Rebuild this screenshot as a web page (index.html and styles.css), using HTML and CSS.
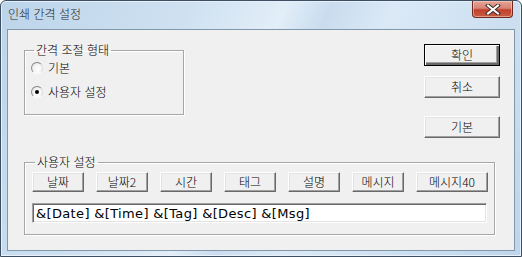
FILE: index.html
```html
<!DOCTYPE html>
<html lang="ko">
<head>
    <meta charset="UTF-8">
    <title>인쇄 간격 설정</title>
    <link rel="stylesheet" href="styles.css">
</head>
<body>
    <div class="window">
        <div class="titlebar">
            <span class="title">인쇄 간격 설정</span>
            <span class="close-btn">
                <svg width="18" height="11" viewBox="0 0 18 11">
                    <path d="M4 1.5 L14 9.5 M14 1.5 L4 9.5" stroke="#3c2a28" stroke-width="4" stroke-linecap="square"/>
                    <path d="M4 1.5 L14 9.5 M14 1.5 L4 9.5" stroke="#ffffff" stroke-width="2" stroke-linecap="square"/>
                </svg>
            </span>
        </div>

        <div class="client">
            <div class="top-row">
                <fieldset class="group group-mode">
                    <legend>간격 조절 형태</legend>
                    <div class="radio-row">
                        <span class="radio"></span>
                        <span>기본</span>
                    </div>
                    <div class="radio-row">
                        <span class="radio checked"></span>
                        <span>사용자 설정</span>
                    </div>
                </fieldset>

                <div class="side-buttons">
                    <button class="btn btn-side default">확인</button>
                    <button class="btn btn-side">취소</button>
                    <button class="btn btn-side btn-reset">기본</button>
                </div>
            </div>

            <fieldset class="group group-user">
                <legend>사용자 설정</legend>
                <div class="tag-buttons">
                    <button class="btn btn-tag">날짜</button>
                    <button class="btn btn-tag">날짜2</button>
                    <button class="btn btn-tag">시간</button>
                    <button class="btn btn-tag">태그</button>
                    <button class="btn btn-tag">설명</button>
                    <button class="btn btn-tag">메시지</button>
                    <button class="btn btn-tag wide">메시지40</button>
                </div>
                <div class="format-field">&amp;[Date] &amp;[Time] &amp;[Tag] &amp;[Desc] &amp;[Msg]</div>
            </fieldset>
        </div>
    </div>
</body>
</html>
```

FILE: styles.css
```css
/* 대화상자 기본 */
body {
    margin: 0;
    padding: 0;
    background-color: #ffffff;
    font-family: "Noto Sans CJK KR", "DejaVu Sans", sans-serif;
    font-size: 12px;
    font-weight: 300;
}

.window {
    width: 522px;
    height: 257px;
    box-sizing: border-box;
    border: 1px solid #3d4f62;
    border-radius: 6px 6px 0 0;
    padding: 0 6px 5px 6px;
    background: linear-gradient(115deg, #bcd4ea 0%, #cfe1f1 30%, #e2eef8 45%, #c9dcee 52%, #dbe9f6 62%, #cde0f1 80%, #bcd6ec 100%);
    box-shadow: inset 0 0 0 1px #e8f1f9;
}

.titlebar {
    height: 28px;
    display: flex;
    justify-content: space-between;
    align-items: flex-start;
}

.title {
    margin: 6px 0 0 1px;
    color: #1e1e1e;
    line-height: 14px;
}

.close-btn {
    width: 41px;
    height: 17px;
    margin-right: 2px;
    box-sizing: border-box;
    border: 1px solid #6f2a22;
    border-top: none;
    border-radius: 0 0 4px 4px;
    background: linear-gradient(#e4a496 0%, #d98474 45%, #c1412d 55%, #c85c41 100%);
    box-shadow: inset 0 0 0 1px rgba(255, 220, 210, 0.5);
    display: flex;
    justify-content: center;
    align-items: center;
}

.client {
    height: 222px;
    box-sizing: border-box;
    border: 1px solid #8397ab;
    background-color: #f0f0f0;
    padding: 13px 14px 0 16px;
    color: #000000;
}

/* 그룹 상자 */
.group {
    margin: 0;
    border: 1px solid #a6a6a6;
    box-shadow: 1px 1px 0 #ffffff, inset 1px 1px 0 #ffffff;
    min-width: 0;
}

.group legend {
    padding: 0 2px;
    margin-left: 3px;
    line-height: 14px;
}

.top-row {
    height: 112px;
    display: flex;
    justify-content: space-between;
    align-items: flex-start;
}

.group-mode {
    width: 160px;
    height: 72px;
    box-sizing: border-box;
    padding: 0 6px 0 6px;
}

.radio-row {
    height: 24px;
    display: flex;
    align-items: center;
    gap: 5px;
    line-height: 14px;
}

.radio-row:first-of-type {
    margin-top: -1px;
}

.radio {
    width: 12px;
    height: 12px;
    box-sizing: border-box;
    border-radius: 50%;
    border: 1px solid;
    border-color: #808080 #dcdcdc #ffffff #909090;
    background: radial-gradient(circle at 60% 60%, #ffffff 0%, #f4f4f4 50%, #d6d6d6 100%);
    position: relative;
}

.radio.checked::after {
    content: "";
    position: absolute;
    left: 3px;
    top: 3px;
    width: 4px;
    height: 4px;
    border-radius: 50%;
    background-color: #000000;
}

/* 버튼 */
.btn {
    font-family: "Noto Sans CJK KR", "DejaVu Sans", sans-serif;
    font-size: 12px;
    font-weight: 300;
    color: #000000;
    background-color: #f0f0f0;
    border: 1px solid;
    border-color: #ffffff #696969 #696969 #ffffff;
    box-shadow: inset -1px -1px 0 #a0a0a0, inset 1px 1px 0 #e3e3e3;
    padding: 0;
    line-height: 14px;
    cursor: pointer;
}

.side-buttons {
    margin-top: 1px;
    display: flex;
    flex-direction: column;
    gap: 10px;
}

.btn-side {
    width: 76px;
    height: 22px;
}

.btn-reset {
    margin-top: 8px;
}

.btn.default {
    border-color: #000000;
    box-shadow: inset 1px 1px 0 #ffffff, inset -2px -2px 0 #696969, inset -3px -3px 0 #a0a0a0;
}

.group-user {
    width: 471px;
    height: 80px;
    box-sizing: border-box;
    padding: 3px 6px 0 7px;
}

.tag-buttons {
    display: flex;
    gap: 12px;
}

.btn-tag {
    width: 52px;
    height: 20px;
}

.btn-tag.wide {
    width: 72px;
}

.format-field {
    margin-top: 11px;
    width: 455px;
    height: 20px;
    box-sizing: border-box;
    background-color: #ffffff;
    border: 1px solid;
    border-color: #a0a0a0 #ffffff #ffffff #a0a0a0;
    box-shadow: inset 1px 1px 0 #696969, inset -1px -1px 0 #e3e3e3;
    padding: 2px 3px;
    font-family: "DejaVu Sans", sans-serif;
    font-size: 13px;
    font-weight: 400;
    letter-spacing: 0.35px;
    line-height: 15px;
    white-space: nowrap;
}
```
